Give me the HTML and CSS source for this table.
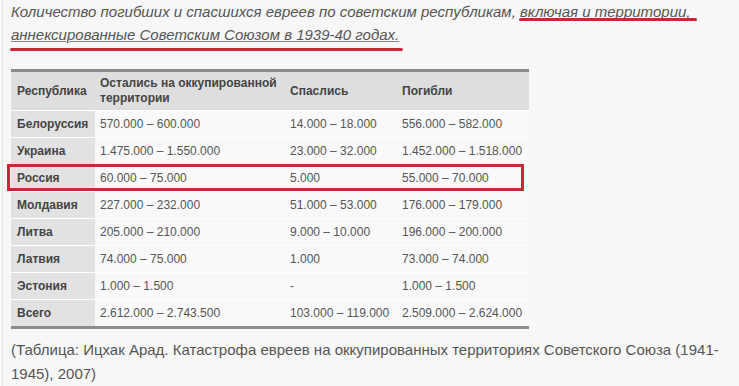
FILE: index.html
```html
<!DOCTYPE html>
<html lang="ru">
<head>
<meta charset="utf-8">
<title>Таблица</title>
<link rel="stylesheet" href="styles.css">
</head>
<body>
<div class="page">
  <p class="intro">Количество погибших и спасшихся евреев по советским республикам, <a class="link mark mark-1">включая и территории,</a><br><a class="link mark mark-2">аннексированные Советским Союзом в 1939-40 годах.</a></p>

  <div class="table-wrap">
    <table class="data">
      <colgroup>
        <col class="c1"><col class="c2"><col class="c3"><col class="c4">
      </colgroup>
      <thead>
        <tr><th>Республика</th><th>Остались на оккупированной территории</th><th>Спаслись</th><th>Погибли</th></tr>
      </thead>
      <tbody>
        <tr><th>Белоруссия</th><td>570.000 – 600.000</td><td>14.000 – 18.000</td><td>556.000 – 582.000</td></tr>
        <tr><th>Украина</th><td>1.475.000 – 1.550.000</td><td>23.000 – 32.000</td><td>1.452.000 – 1.518.000</td></tr>
        <tr class="hl"><th>Россия</th><td>60.000 – 75.000</td><td>5.000</td><td>55.000 – 70.000</td></tr>
        <tr><th>Молдавия</th><td>227.000 – 232.000</td><td>51.000 – 53.000</td><td>176.000 – 179.000</td></tr>
        <tr><th>Литва</th><td>205.000 – 210.000</td><td>9.000 – 10.000</td><td>196.000 – 200.000</td></tr>
        <tr><th>Латвия</th><td>74.000 – 75.000</td><td>1.000</td><td>73.000 – 74.000</td></tr>
        <tr><th>Эстония</th><td>1.000 – 1.500</td><td>-</td><td>1.000 – 1.500</td></tr>
        <tr><th>Всего</th><td>2.612.000 – 2.743.500</td><td>103.000 – 119.000</td><td>2.509.000 – 2.624.000</td></tr>
      </tbody>
    </table>
    <div class="highlight-box"></div>
  </div>

  <p class="caption">(Таблица: Ицхак Арад. Катастрофа евреев на оккупированных территориях Советского Союза (1941-1945), 2007)</p>
</div>
</body>
</html>
```

FILE: styles.css
```css
html, body {
  margin: 0;
  padding: 0;
  background: #f7f7f7;
}

body {
  font-family: "Liberation Sans", Arial, sans-serif;
  color: #555;
}

.page {
  margin-left: 2px;
  border-left: 1px solid #e4e4e4;
  padding: 0 14px 0 8px;
  min-height: 386px;
  box-sizing: border-box;
}

.intro {
  margin: 0;
  font-size: 15px;
  line-height: 23px;
  font-style: italic;
  color: #555;
}

.link {
  color: #555;
  text-decoration: underline;
  text-decoration-color: #888;
  text-decoration-thickness: 1px;
}

.mark {
  position: relative;
}

.mark::after {
  content: "";
  position: absolute;
  height: 3px;
  background: #c62a36;
  border-radius: 2px;
}

.mark-1::after {
  left: -1px;
  right: -6px;
  bottom: -1px;
}

.mark-2::after {
  left: -1px;
  right: -4px;
  bottom: -8px;
}

.table-wrap {
  position: relative;
  margin-top: 23px;
  width: 518px;
}

.data {
  width: 518px;
  border-collapse: collapse;
  table-layout: fixed;
  font-size: 12px;
  color: #444;
  border-top: 3px solid #8c8c8c;
  border-bottom: 3px solid #8c8c8c;
}

.c1 { width: 84px; }
.c2 { width: 189px; }
.c3 { width: 112px; }
.c4 { width: 133px; }

.data th,
.data td {
  text-align: left;
  padding: 0 4px 0 6px;
  vertical-align: middle;
  line-height: 15px;
}

.data td:nth-child(2),
.data th:nth-child(2) {
  padding-left: 5px;
}

.data thead th {
  height: 38px;
  background: #dedede;
  font-weight: bold;
  color: #444;
}

.data tbody th,
.data tbody td {
  height: 26px;
  border-top: 1px solid #ffffff;
}

.data tbody th {
  background: #e2e2e2;
  font-weight: bold;
  color: #444;
}

.data tbody td {
  background: #f9f9f9;
  font-weight: normal;
  color: #555;
}

.highlight-box {
  position: absolute;
  left: -4px;
  top: 95px;
  width: 517px;
  height: 27px;
  border: 3px solid #c62a36;
  box-sizing: border-box;
  pointer-events: none;
}

.caption {
  margin: 9px 0 0;
  font-size: 15px;
  line-height: 24px;
  color: #555;
}
```
